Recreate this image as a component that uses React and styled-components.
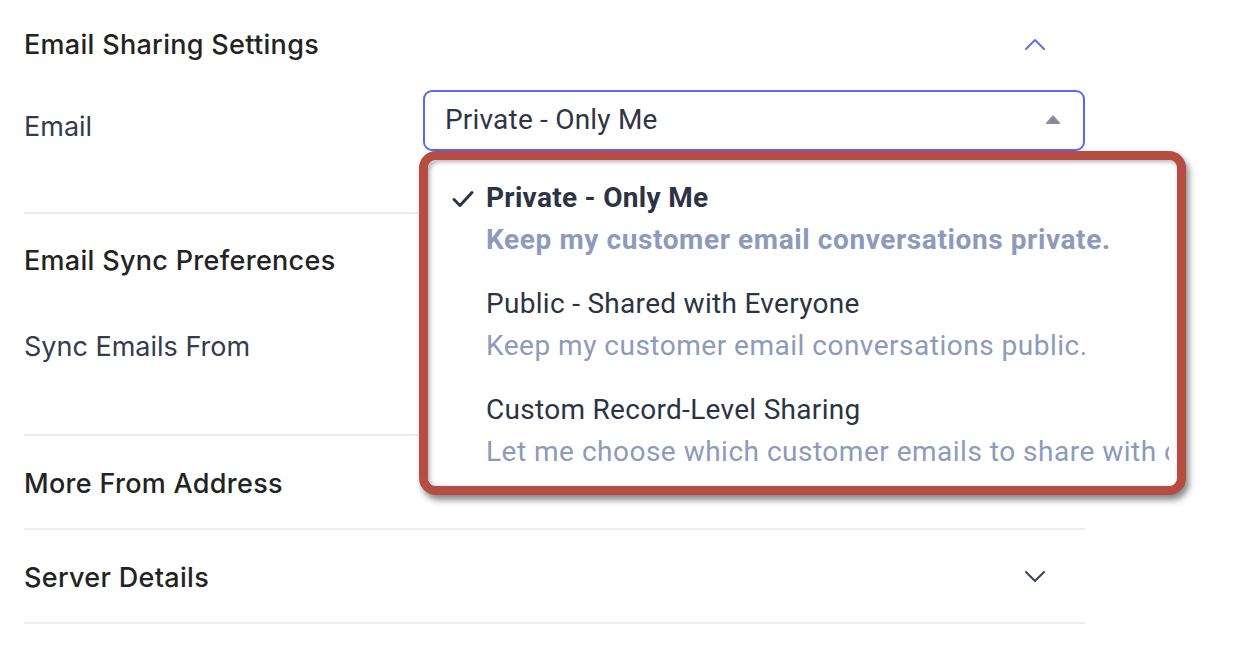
import React from 'react';
import styled, { createGlobalStyle } from 'styled-components';

const GlobalStyle = createGlobalStyle`
  html, body {
    margin: 0;
    padding: 0;
    background: #fff;
  }
  body {
    font-family: Inter, "Noto Sans", sans-serif;
    color: #222;
  }
`;

const options = [
  {
    title: 'Private - Only Me',
    desc: 'Keep my customer email conversations private.',
    selected: true,
  },
  {
    title: 'Public - Shared with Everyone',
    desc: 'Keep my customer email conversations public.',
  },
  {
    title: 'Custom Record-Level Sharing',
    desc: 'Let me choose which customer emails to share with colleagues.',
  },
];

const Chevron = ({ up, color }) => (
  <svg width="20" height="12" viewBox="0 0 20 12" fill="none">
    <path
      d={up ? 'M1 11L10 2L19 11' : 'M1 1L10 10L19 1'}
      stroke={color}
      strokeWidth="2"
      strokeLinecap="round"
      strokeLinejoin="round"
    />
  </svg>
);

const Check = () => (
  <svg width="22" height="18" viewBox="0 0 22 18" fill="none">
    <path d="M2 9.5L8 15.5L20 2.5" stroke="#2c3344" strokeWidth="3" strokeLinecap="round" strokeLinejoin="round" />
  </svg>
);

const App = () => {
  return (
    <>
      <GlobalStyle />
      <Page>
        <Section $height={214}>
          <SectionHeader $top={26}>
            <HeaderTitle>Email Sharing Settings</HeaderTitle>
            <ChevronBox>
              <Chevron up color="#6070f0" />
            </ChevronBox>
          </SectionHeader>
          <FieldRow $top={28}>
            <FieldLabel>Email</FieldLabel>
            <SelectWrap>
              <SelectBox>
                <SelectValue>Private - Only Me</SelectValue>
                <Caret />
              </SelectBox>
              <Menu>
                <MenuInner>
                  {options.map((o) => (
                    <MenuItem key={o.title}>
                      <CheckSlot>{o.selected && <Check />}</CheckSlot>
                      <ItemText>
                        <ItemTitle $selected={o.selected}>{o.title}</ItemTitle>
                        <ItemDesc $selected={o.selected}>{o.desc}</ItemDesc>
                      </ItemText>
                    </MenuItem>
                  ))}
                </MenuInner>
              </Menu>
            </SelectWrap>
          </FieldRow>
        </Section>
        <Section $height={222}>
          <SectionHeader $top={28}>
            <HeaderTitle>Email Sync Preferences</HeaderTitle>
          </SectionHeader>
          <FieldRow $top={32}>
            <FieldLabel>Sync Emails From</FieldLabel>
          </FieldRow>
        </Section>
        <Section $height={94}>
          <SectionHeader $top={29}>
            <HeaderTitle>More From Address</HeaderTitle>
          </SectionHeader>
        </Section>
        <Section $height={94}>
          <SectionHeader $top={29}>
            <HeaderTitle>Server Details</HeaderTitle>
            <ChevronBox>
              <Chevron color="#3b4252" />
            </ChevronBox>
          </SectionHeader>
        </Section>
      </Page>
    </>
  );
};

const Page = styled.div`
  width: 1061px;
  padding-left: 24px;
`;

const Section = styled.section`
  height: ${(p) => p.$height}px;
  box-sizing: border-box;
  border-bottom: 2px solid #ececf1;
`;

const SectionHeader = styled.div`
  display: flex;
  align-items: center;
  justify-content: space-between;
  padding-top: ${(p) => p.$top}px;
  height: 36px;
`;

const HeaderTitle = styled.h2`
  margin: 0;
  font-size: 27px;
  font-weight: 500;
  color: #232323;
  letter-spacing: 0.3px;
`;

const ChevronBox = styled.div`
  width: 20px;
  height: 12px;
  display: flex;
  margin-right: 40px;
`;

const FieldRow = styled.div`
  display: flex;
  align-items: flex-start;
  margin-top: ${(p) => p.$top}px;
`;

const FieldLabel = styled.div`
  width: 399px;
  font-size: 27px;
  color: #343b4c;
  padding-top: 20px;
  letter-spacing: 0;
`;

const SelectWrap = styled.div`
  position: relative;
  flex: 1;
`;

const SelectBox = styled.div`
  height: 61px;
  box-sizing: border-box;
  border: 2px solid #5a67f2;
  border-radius: 9px;
  display: flex;
  align-items: center;
  justify-content: space-between;
  padding: 0 22px 2px 20px;
`;

const SelectValue = styled.span`
  font-family: Roboto, sans-serif;
  font-size: 28px;
  color: #2f3545;
  letter-spacing: 0.2px;
`;

const Caret = styled.span`
  width: 0;
  height: 0;
  border-left: 8px solid transparent;
  border-right: 8px solid transparent;
  border-bottom: 9px solid #8a8d96;
  border-radius: 2px;
`;

const Menu = styled.div`
  position: absolute;
  left: -4px;
  top: 61px;
  width: 767px;
  height: 344px;
  box-sizing: border-box;
  border: 9px solid #b54d43;
  border-radius: 17px;
  background: #fff;
  box-shadow: 3px 5px 6px rgba(40, 40, 40, 0.55);
  overflow: hidden;
`;

const MenuInner = styled.div`
  height: 100%;
  border-radius: 9px;
  box-shadow: inset 2px 2px 4px rgba(40, 40, 40, 0.35);
  padding: 22px 8px 0 24px;
  box-sizing: border-box;
  overflow: hidden;
`;

const MenuItem = styled.div`
  display: flex;
  align-items: flex-start;
  height: 106px;
`;

const CheckSlot = styled.div`
  width: 34px;
  flex: none;
  padding-top: 8px;
`;

const ItemText = styled.div`
  display: flex;
  flex-direction: column;
  gap: 10px;
  min-width: 0;
  white-space: nowrap;
  overflow: hidden;
`;

const ItemTitle = styled.div`
  font-family: Roboto, sans-serif;
  font-size: 28px;
  line-height: 32px;
  font-weight: ${(p) => (p.$selected ? 700 : 400)};
  color: #2c3344;
  letter-spacing: 0.3px;
`;

const ItemDesc = styled.div`
  font-family: Roboto, sans-serif;
  font-size: 28px;
  line-height: 32px;
  font-weight: ${(p) => (p.$selected ? 700 : 400)};
  color: #8d9aba;
  letter-spacing: ${(p) => (p.$selected ? '0.6px' : '0.5px')};
`;

export default App;
